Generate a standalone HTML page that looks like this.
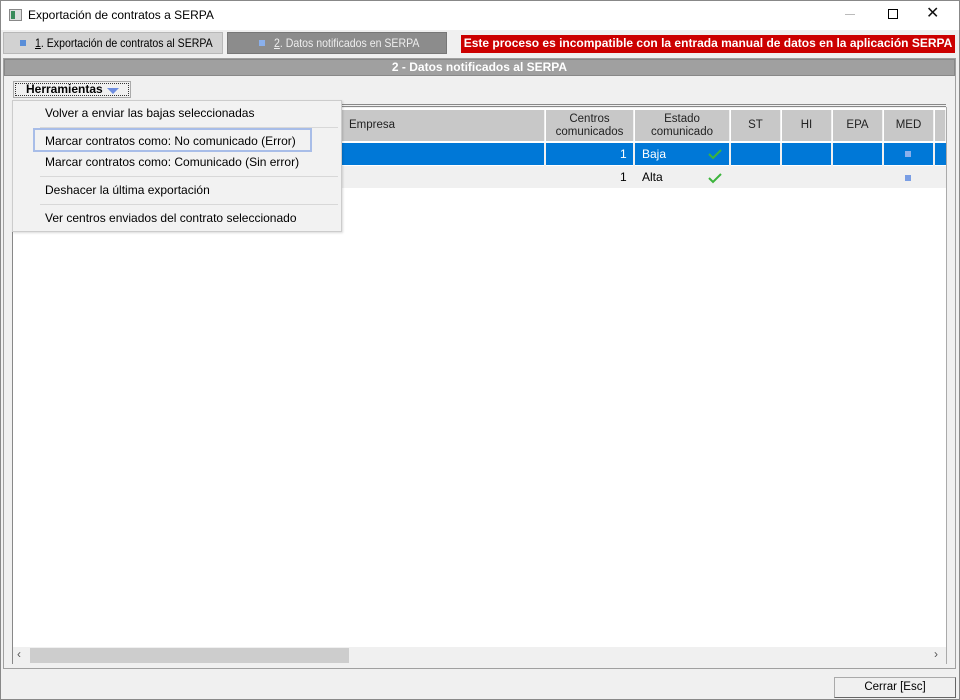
<!DOCTYPE html>
<html><head><meta charset="utf-8"><style>
*{box-sizing:border-box;margin:0;padding:0}
body{width:960px;height:700px;background:#f0f0f0;font-family:"Liberation Sans",sans-serif;font-size:12px;color:#000;position:relative;overflow:hidden}
.a{position:absolute}
.hd{position:absolute;top:110px;height:31px;background:#c8c8c8;border-right:1px solid #f0f0f0;text-align:center;font-size:11.5px;line-height:13px;display:flex;align-items:center;justify-content:center;color:#222}
.mi{position:absolute;left:45px;font-size:12px}
.sep{position:absolute;left:40px;width:298px;height:1px;background:#d8d8d8}
.nx{transform:scaleX(0.88);transform-origin:left top;white-space:nowrap}
</style></head><body>
<div class="a" style="left:0;top:0;width:960px;height:30px;background:#fff"></div>
<div class="a" style="left:9px;top:9px;width:13px;height:12px;border:1px solid #888;background:#ddd"><div style="position:absolute;left:1px;top:1px;width:4px;height:8px;background:#3a8a5a"></div></div>
<div class="a" style="left:28px;top:8px;font-size:12px">Exportación de contratos a SERPA</div>
<div class="a" style="left:845px;top:14px;width:10px;height:1px;background:#bbb"></div>
<div class="a" style="left:888px;top:9px;width:10px;height:10px;border:1px solid #000"></div>
<div class="a" style="left:926px;top:3px;font-size:16px;color:#111">✕</div>
<div class="a" style="left:3px;top:32px;width:220px;height:22px;background:#d2d2d2;border:1px solid #b8b8b8"></div>
<div class="a" style="left:20px;top:40px;width:6px;height:6px;background:#5a8ed8"></div>
<div class="a nx" style="left:35px;top:36px;font-size:12px"><u>1</u>. Exportación de contratos al SERPA</div>
<div class="a" style="left:227px;top:32px;width:220px;height:22px;background:#8c8c8c;border:1px solid #777"></div>
<div class="a" style="left:259px;top:40px;width:6px;height:6px;background:#8ab0ec"></div>
<div class="a nx" style="left:274px;top:36px;font-size:12px;color:#eee"><u>2</u>. Datos notificados en SERPA</div>
<div class="a" style="left:461px;top:35px;width:494px;height:18px;background:#cc0000;color:#fff;font-weight:bold;font-size:12px;line-height:17px;text-align:center">Este proceso es incompatible con la entrada manual de datos en la aplicación SERPA</div>
<div class="a" style="left:3px;top:58px;width:953px;height:611px;border:1px solid #a0a0a0"></div>
<div class="a" style="left:4px;top:59px;width:951px;height:17px;background:#a0a0a0;border:1px solid #888;color:#fff;font-weight:bold;text-align:center;line-height:15px;font-size:12px">2 - Datos notificados al SERPA</div>
<div class="a" style="left:13px;top:81px;width:118px;height:17px;border:1px solid #aaa;background:#f0f0f0"><div style="position:absolute;left:1px;top:1px;right:1px;bottom:1px;border:1px dotted #333"></div></div>
<div class="a" style="left:26px;top:82px;font-weight:bold;font-size:12px">Herramientas</div>
<div class="a" style="left:107px;top:88px;width:0;height:0;border-left:6px solid transparent;border-right:6px solid transparent;border-top:6px solid #6f8ee0"></div>
<div class="a" style="left:12px;top:104px;width:934px;height:3px;border-top:1px solid #888;border-bottom:1px solid #888"></div>
<div class="a" style="left:12px;top:108px;width:934px;height:556px;background:#fff;border-left:1px solid #888"></div>
<div class="hd" style="left:12px;width:533px;justify-content:flex-start;padding-left:337px">Empresa</div>
<div class="hd" style="left:546px;width:88px">Centros<br>comunicados</div>
<div class="hd" style="left:635px;width:95px">Estado<br>comunicado</div>
<div class="hd" style="left:731px;width:50px">ST</div>
<div class="hd" style="left:782px;width:50px">HI</div>
<div class="hd" style="left:833px;width:50px">EPA</div>
<div class="hd" style="left:884px;width:50px">MED</div>
<div class="hd" style="left:935px;width:11px"></div>
<div class="a" style="left:12px;top:143px;width:934px;height:22px;background:#0078d7"></div>
<div class="a" style="left:12px;top:166px;width:934px;height:22px;background:#f0f0f0"></div>
<div class="a" style="left:544px;top:143px;width:2px;height:45px;background:#f0f0f0"></div>
<div class="a" style="left:633px;top:143px;width:2px;height:45px;background:#f0f0f0"></div>
<div class="a" style="left:729px;top:143px;width:2px;height:45px;background:#f0f0f0"></div>
<div class="a" style="left:780px;top:143px;width:2px;height:45px;background:#f0f0f0"></div>
<div class="a" style="left:831px;top:143px;width:2px;height:45px;background:#f0f0f0"></div>
<div class="a" style="left:882px;top:143px;width:2px;height:45px;background:#f0f0f0"></div>
<div class="a" style="left:933px;top:143px;width:2px;height:45px;background:#f0f0f0"></div>
<div class="a" style="left:620px;top:147px;color:#fff">1</div>
<div class="a" style="left:620px;top:170px">1</div>
<div class="a" style="left:642px;top:147px;color:#fff">Baja</div>
<div class="a" style="left:642px;top:170px">Alta</div>
<svg class="a" style="left:708px;top:148px" width="14" height="12"><path d="M1 6 L5 10 L13 2" stroke="#3cb43c" stroke-width="2" fill="none"/></svg>
<svg class="a" style="left:708px;top:172px" width="14" height="12"><path d="M1 6 L5 10 L13 2" stroke="#3cb43c" stroke-width="2" fill="none"/></svg>
<div class="a" style="left:905px;top:151px;width:6px;height:6px;background:#8ab0ec"></div>
<div class="a" style="left:905px;top:175px;width:6px;height:6px;background:#7a9ee4"></div>
<div class="a" style="left:13px;top:647px;width:933px;height:17px;background:#f0f0f0"></div>
<div class="a" style="left:30px;top:648px;width:319px;height:15px;background:#cdcdcd"></div>
<div class="a" style="left:17px;top:647px;color:#555;font-size:12px">‹</div>
<div class="a" style="left:934px;top:647px;color:#555;font-size:12px">›</div>
<div class="a" style="left:946px;top:107px;width:1px;height:557px;background:#aaa"></div>
<div class="a" style="left:834px;top:677px;width:122px;height:21px;background:#f0f0f0;border:1px solid #aaa;border-right-color:#666;border-bottom-color:#666;text-align:center;line-height:19px;font-size:11.5px">Cerrar [Esc]</div>
<div class="a" style="left:0;top:0;width:960px;height:700px;border:1px solid #888"></div>
<div class="a" style="left:12px;top:100px;width:330px;height:132px;background:#f2f2f2;border:1px solid #ccc;box-shadow:1px 1px 2px rgba(0,0,0,.15)"></div>
<div class="mi" style="top:106px">Volver a enviar las bajas seleccionadas</div>
<div class="sep" style="top:127px"></div>
<div class="a" style="left:33px;top:128px;width:279px;height:24px;border:2px solid #a8bde8"></div>
<div class="mi" style="top:134px">Marcar contratos como: No comunicado (Error)</div>
<div class="mi" style="top:155px">Marcar contratos como: Comunicado (Sin error)</div>
<div class="sep" style="top:176px"></div>
<div class="mi" style="top:183px">Deshacer la última exportación</div>
<div class="sep" style="top:204px"></div>
<div class="mi" style="top:211px">Ver centros enviados del contrato seleccionado</div>
</body></html>
